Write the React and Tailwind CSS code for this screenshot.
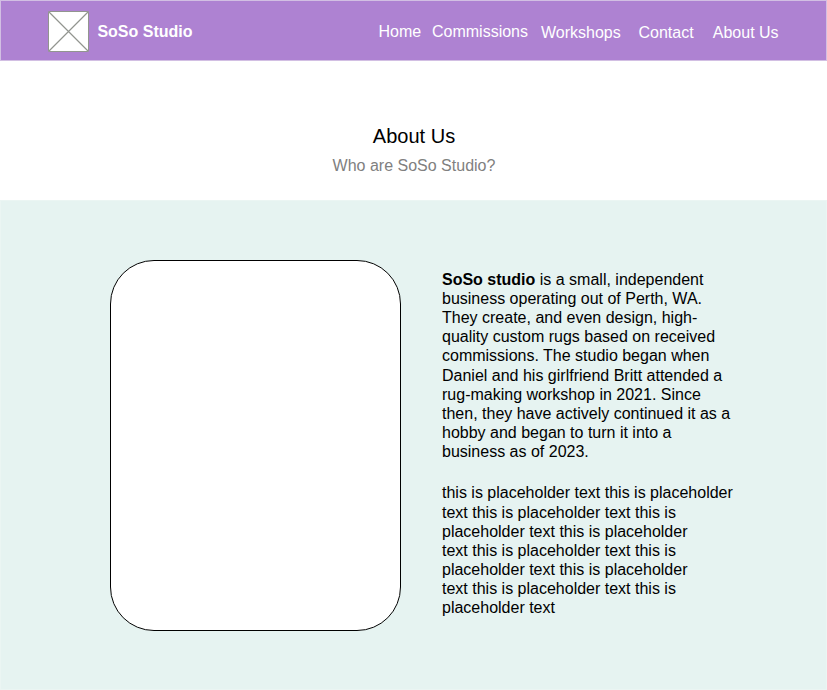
const studioLines = [
  "business operating out of Perth, WA.",
  "They create, and even design, high-",
  "quality custom rugs based on received",
  "commissions. The studio began when",
  "Daniel and his girlfriend Britt attended a",
  "rug-making workshop in 2021. Since",
  "then, they have actively continued it as a",
  "hobby and began to turn it into a",
  "business as of 2023.",
];

const placeholderLines = [
  "this is placeholder text this is placeholder",
  "text this is placeholder text this is",
  "placeholder text this is placeholder",
  "text this is placeholder text this is",
  "placeholder text this is placeholder",
  "text this is placeholder text this is",
  "placeholder text",
];

function Logo() {
  return (
    <svg className="h-[41px] w-[41px] shrink-0" viewBox="0 0 41 41" fill="#fff" stroke="#92958f">
      <rect x="0.5" y="0.5" width="40" height="40" rx="1.5" />
      <path d="M0.5 0.5L40.5 40.5M40.5 0.5L0.5 40.5" strokeWidth="1.15" />
    </svg>
  );
}

export default function App() {
  return (
    <div className="h-[690px] w-[827px] overflow-hidden bg-white font-['Liberation_Sans',Arial,sans-serif] text-base text-black">
      <header className="flex h-[61px] border border-[#d2bfe3] bg-[#ae82d2] pl-[47px] text-white">
        <div className="flex w-[330.5px] pt-[10px]">
          <Logo />
          <span className="ml-[8.4px] pt-[11px] font-bold leading-[20px]">SoSo Studio</span>
        </div>
        <nav className="flex pt-[21px] leading-[20px] whitespace-nowrap">
          <a className="w-[53.5px]">Home</a>
          <a className="w-[109px]">Commissions</a>
          <a className="w-[97.5px] pt-px">Workshops</a>
          <a className="w-[74.3px] pt-px">Contact</a>
          <a className="pt-px">About Us</a>
        </nav>
      </header>
      <section className="h-[139px] pl-px pt-[63px] text-center">
        <h1 className="text-[20px] leading-[24px]">About Us</h1>
        <p className="mt-[8px] leading-[20px] text-[#808080]">Who are SoSo Studio?</p>
      </section>
      <main className="flex h-[490px] border border-[#ebf5f3] bg-[#e6f3f1] pl-[109px] pt-[59px]">
        <div className="h-[371px] w-[291px] shrink-0 rounded-[44px] border border-black bg-white" />
        <div className="ml-[41px] pt-[9.55px] leading-[19.2px] whitespace-nowrap">
          <p>
            <strong>SoSo studio</strong> is a small, independent
            {studioLines.map((line) => (
              <span key={line} className="block">{line}</span>
            ))}
          </p>
          <p className="mt-[21.86px] leading-[19.14px]">
            {placeholderLines.map((line, i) => (
              <span key={i} className="block">{line}</span>
            ))}
          </p>
        </div>
      </main>
    </div>
  );
}
